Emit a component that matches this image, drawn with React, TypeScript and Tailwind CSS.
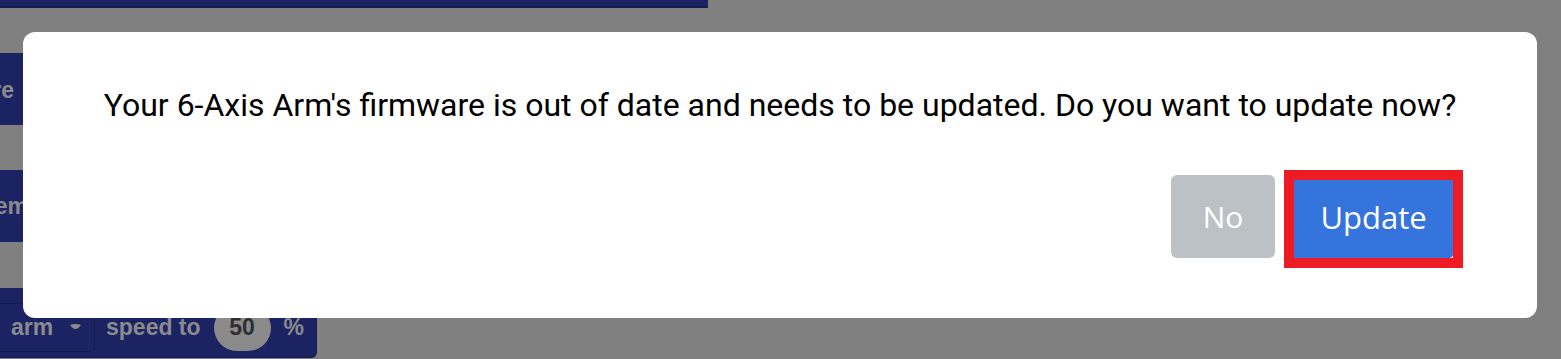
import React from 'react';

const blockText = "font-['Liberation_Sans',Arial,sans-serif] font-bold text-[23px] text-[#8a8a8f]";

const Workspace: React.FC = () => (
  <>
    {/* top toolbar strip */}
    <div className="absolute left-0 top-0 w-[708px] h-[8px] bg-[#1c2362] border-b-2 border-[#161b4f]" />

    {/* blocks peeking out from behind the modal */}
    <div className="absolute left-[-200px] top-[53px] w-[400px] h-[72px] bg-[#1c2362] rounded-md">
      <span className={`absolute right-[186px] top-[20px] ${blockText}`}>are</span>
    </div>
    <div className="absolute left-[-200px] top-[170px] w-[400px] h-[72px] bg-[#1c2362] rounded-md">
      <span className={`absolute left-[187px] top-[19px] ${blockText}`}>tem</span>
    </div>
    <div className="absolute left-[-20px] top-[288px] w-[337px] h-[70px] bg-[#1c2362] rounded-md border-r border-b border-[#151a4a] flex items-center pl-[20px] gap-[11px]">
      <div className="h-[49px] w-[101px] -ml-[6px] rounded-md border border-[#161b4f] flex items-center pl-[16px] gap-[16px] mt-[10px]">
        <span className={blockText}>arm</span>
        <svg width="13" height="10" viewBox="0 0 13 10">
          <path d="M1 2 Q6.5 10 12 2 Q6.5 0 1 2Z" fill="#8a8a8f" />
        </svg>
      </div>
      <span className={`${blockText} mt-[10px]`}>speed to</span>
      <div className="h-[46px] w-[57px] rounded-full bg-[#8a8a8a] flex items-center justify-center mt-[10px] ml-[2px]">
        <span className="font-['Liberation_Sans',Arial,sans-serif] font-bold text-[23px] text-[#2f2f33]">50</span>
      </div>
      <span className={`${blockText} mt-[10px] ml-[2px]`}>%</span>
    </div>
  </>
);

const FirmwareModal: React.FC = () => (
  <div className="absolute left-[23px] top-[32px] w-[1514px] h-[286px] bg-white rounded-[12px] flex flex-col">
    <p className="pt-[49px] text-center font-['Roboto',Arial,sans-serif] text-[32px] leading-[48px] text-black">
      Your 6-Axis Arm's firmware is out of date and needs to be updated. Do you want to update now?
    </p>
    <div className="flex justify-end items-start mt-[41px] pr-[74px] gap-[9px]">
      <button className="mt-[5px] w-[104px] h-[83px] rounded-[6px] bg-[#bcc1c6] text-white font-['Open_Sans',sans-serif] text-[30px]">
        No
      </button>
      <div className="border-[10px] border-[#ed1c24]">
        <button className="w-[159px] h-[78px] bg-[#3574dc] rounded-br-[4px] text-white font-['Open_Sans',sans-serif] text-[31px] leading-none pb-[4px]">
          Update
        </button>
      </div>
    </div>
  </div>
);

export default function App() {
  return (
    <div className="relative w-[1561px] h-[359px] bg-[#808080] overflow-hidden">
      <Workspace />
      <FirmwareModal />
    </div>
  );
}
